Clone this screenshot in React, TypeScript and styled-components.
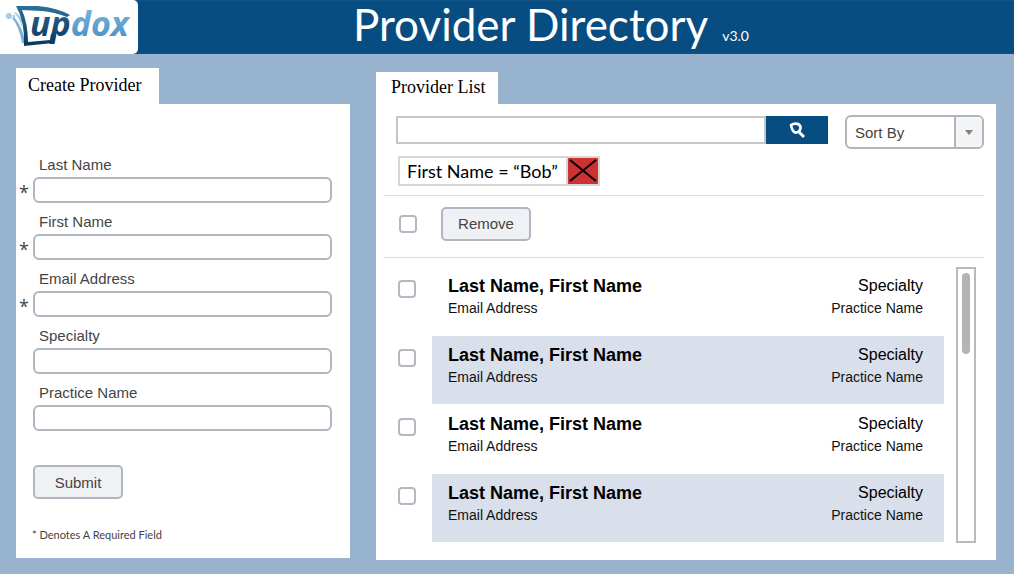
import React from "react";
import styled, { createGlobalStyle } from "styled-components";

const sans = '"Liberation Sans", Arial, sans-serif';
const serif = '"Liberation Serif", "Times New Roman", serif';
const humanist = 'Lato, "Open Sans", sans-serif';

const GlobalStyle = createGlobalStyle`
  *, *::before, *::after { box-sizing: border-box; }
  body { margin: 0; background: #97b3ce; font-family: ${sans}; color: #000; }
  button, input, select { font-family: inherit; margin: 0; }
`;

const Header = styled.header`
  display: flex;
  height: 54px;
  background: #074d81;
  border-top: 1px solid #0d5588;
  border-bottom: 1px solid #0d5588;
`;

const LogoBox = styled.a`
  flex: none;
  width: 138px;
  height: 54px;
  margin-top: -1px;
  background: #fff;
  border-radius: 0 5px 5px 0;
  svg { display: block; }
`;

const TitleGroup = styled.div`
  display: flex;
  flex: 1;
  align-items: baseline;
  justify-content: center;
  gap: 14px;
  padding-right: 50px;
  font-family: ${humanist};
  color: #fff;
`;

const Title = styled.h1`
  margin: 0;
  font-size: 44px;
  font-weight: 400;
  line-height: 46px;
`;

const Version = styled.span`
  font-size: 14px;
`;

const Main = styled.main`
  display: flex;
  align-items: stretch;
  gap: 26px;
  padding: 14px 18px 14px 16px;
`;

const Column = styled.section<{ $grow: number }>`
  display: flex;
  flex-direction: column;
  flex: ${(p) => p.$grow} 1 0;
  min-width: 0;
`;

const Tab = styled.h2<{ $short?: boolean }>`
  align-self: flex-start;
  margin: ${(p) => (p.$short ? "4px 0 0" : "0")};
  padding: ${(p) => (p.$short ? "4px 12px 6px 15px" : "6px 18px 8px 12px")};
  background: #fff;
  font-family: ${serif};
  font-size: 18px;
  font-weight: 400;
  line-height: 22px;
`;

const FormPanel = styled.form`
  display: flex;
  flex-direction: column;
  align-items: flex-start;
  padding: 52px 18px 15px 3px;
  background: #fff;
`;

const Fields = styled.div`
  display: flex;
  flex-direction: column;
  gap: 10px;
  width: 100%;
`;

const Field = styled.div`
  display: grid;
  grid-template-columns: 14px 1fr;
  row-gap: 4px;
`;

const Label = styled.label`
  grid-column: 2;
  padding-left: 6px;
  font-size: 15px;
  line-height: 17px;
  color: #444;
`;

const Required = styled.span`
  font-family: "Open Sans", sans-serif;
  font-size: 18px;
  line-height: 30px;
  height: 26px;
  color: #444;
`;

const TextBox = styled.input`
  grid-column: 2;
  width: 100%;
  height: 26px;
  padding: 0 8px;
  border: 2px solid #b2b6bf;
  border-radius: 6px;
  background: #fff;
  font-size: 15px;
`;

const Button = styled.button`
  width: 90px;
  height: 34px;
  padding: 0;
  border: 2px solid #b2b6bf;
  border-radius: 5px;
  background: #f0f1f4;
  font-size: 15px;
  color: #444;
`;

const SubmitRow = styled.div`
  padding: 34px 0 28px 14px;
`;

const Note = styled.p`
  margin: 0;
  padding-left: 13px;
  font-family: ${humanist};
  font-size: 11px;
  line-height: 16px;
  color: #444;
`;

const ListPanel = styled.div`
  padding: 11px 12px 17px 8px;
  background: #fff;
`;

const SearchRow = styled.form`
  display: flex;
  align-items: center;
  padding-left: 12px;
`;

const SearchGroup = styled.div`
  display: flex;
  flex: 1;
  min-width: 0;
  margin-bottom: 4px;
`;

const SearchInput = styled.input`
  flex: 1;
  min-width: 0;
  height: 28px;
  padding: 0 8px;
  border: 2px solid #c6c6c6;
  background: #fff;
  font-size: 15px;
`;

const SearchButton = styled.button`
  display: flex;
  align-items: center;
  justify-content: center;
  width: 62px;
  height: 28px;
  padding: 0;
  border: 0;
  background: #074d81;
`;

const SortBox = styled.div`
  position: relative;
  width: 139px;
  height: 34px;
  margin-left: 17px;
`;

const SortSelect = styled.select`
  appearance: none;
  width: 100%;
  height: 100%;
  padding: 0 32px 0 8px;
  border: 2px solid #b0b4bd;
  border-radius: 6px;
  background: #fff;
  font-size: 15px;
  color: #444;
`;

const SortArrow = styled.span`
  position: absolute;
  top: 2px;
  right: 2px;
  bottom: 2px;
  display: flex;
  align-items: center;
  justify-content: center;
  width: 28px;
  border-left: 2px solid #b0b4bd;
  border-radius: 0 4px 4px 0;
  background: #f3f4f6;
  pointer-events: none;
`;

const Chip = styled.div`
  display: inline-flex;
  height: 30px;
  margin: 7px 0 9px 14px;
  border: 2px solid #d6d6d6;
  font-family: ${humanist};
  font-size: 18px;
  line-height: 26px;
  vertical-align: top;
`;

const ChipText = styled.span`
  padding: 0 8px 0 7px;
  border-right: 2px solid #d6d6d6;
`;

const ChipRemove = styled.button`
  width: 30px;
  padding: 0;
  border: 0;
  background: #cd3131;
  svg { display: block; }
`;

const BulkRow = styled.div`
  display: flex;
  align-items: center;
  gap: 24px;
  height: 63px;
  padding: 0 0 6px 15px;
  border-top: 1px solid #d8dde8;
  border-bottom: 1px solid #d8dde8;
`;

const CheckBox = styled.input`
  appearance: none;
  flex: none;
  width: 18px;
  height: 18px;
  border: 2px solid #b4b8c1;
  border-radius: 4px;
  background: #fff;
  &:checked { background: #074d81; }
`;

const ListArea = styled.div`
  display: flex;
  gap: 12px;
  padding: 9px 8px 0 14px;
`;

const Providers = styled.ul`
  display: flex;
  flex: 1;
  flex-direction: column;
  gap: 1px;
  min-width: 0;
  margin: 0;
  padding: 0 0 1px;
  list-style: none;
`;

const ProviderItem = styled.li`
  display: flex;
  align-items: flex-start;
  gap: 16px;
`;

const RowCheck = styled(CheckBox)`
  margin-top: 13px;
`;

const ProviderCard = styled.div<{ $shaded: boolean }>`
  display: flex;
  flex: 1;
  justify-content: space-between;
  height: 68px;
  padding: 8px 21px 0 16px;
  background: ${(p) => (p.$shaded ? "#d9dfeb" : "#fff")};
`;

const CardSide = styled.div<{ $end?: boolean }>`
  display: flex;
  flex-direction: column;
  align-items: ${(p) => (p.$end ? "flex-end" : "flex-start")};
`;

const Name = styled.strong`
  font-size: 18px;
  line-height: 22px;
`;

const Specialty = styled.span`
  font-size: 16px;
  line-height: 22px;
`;

const Detail = styled.span`
  font-size: 14px;
  line-height: 22px;
  color: #111;
`;

const ScrollTrack = styled.div`
  width: 20px;
  padding: 4px;
  border: 2px solid #bababa;
  background: #fff;
`;

const ScrollThumb = styled.div`
  width: 8px;
  height: 81px;
  border-radius: 4px;
  background: #b4b4b4;
`;

const Logo = () => (
  <svg width="138" height="54" viewBox="0 0 138 54" role="img" aria-label="updox">
    <defs>
      <linearGradient id="dark" x1="0" y1="0" x2="0" y2="1">
        <stop offset="0" stopColor="#2b7199" />
        <stop offset="1" stopColor="#0b3658" />
      </linearGradient>
      <linearGradient id="light" x1="0" y1="0" x2="0" y2="1">
        <stop offset="0" stopColor="#83bfe2" />
        <stop offset="1" stopColor="#4489bd" />
      </linearGradient>
    </defs>
    <path d="M12 18 Q19 26 22 43 L25 43 Q23 27 14 17Z" fill="#78b4d8" />
    <path d="M14 13 Q19 17 22 27 L22 20 Q20 15 15 12Z" fill="#a5cde5" />
    <circle cx="9" cy="16" r="3" fill="#a5cde5" />
    <circle cx="14" cy="16" r="1" fill="#78b4d8" />
    <path
      d="M16 6 L38 6 Q58 8 70 15 L67 17 Q54 12 42 11 L22 10 Q28 24 28 42 L50 40 L51 34 L55 34 L53 43 L24 46 Q25 21 16 6Z"
      fill="url(#dark)"
    />
    <text y="36" fontFamily="Open Sans, sans-serif" fontSize="34" fontWeight="700" fontStyle="italic">
      <tspan x="30" fill="url(#dark)">up</tspan>
      <tspan fill="url(#light)">dox</tspan>
    </text>
  </svg>
);

const fields = [
  { id: "last-name", label: "Last Name", required: true },
  { id: "first-name", label: "First Name", required: true },
  { id: "email", label: "Email Address", required: true },
  { id: "specialty", label: "Specialty", required: false },
  { id: "practice", label: "Practice Name", required: false },
];

const providers = [1, 2, 3, 4].map((id) => ({
  id,
  name: "Last Name, First Name",
  email: "Email Address",
  specialty: "Specialty",
  practice: "Practice Name",
}));

export default function App() {
  return (
    <>
      <GlobalStyle />
      <Header>
        <LogoBox href="#"><Logo /></LogoBox>
        <TitleGroup>
          <Title>Provider Directory</Title>
          <Version>v3.0</Version>
        </TitleGroup>
      </Header>
      <Main>
        <Column $grow={334}>
          <Tab>Create Provider</Tab>
          <FormPanel onSubmit={(e) => e.preventDefault()}>
            <Fields>
              {fields.map((f) => (
                <Field key={f.id}>
                  <Label htmlFor={f.id}>{f.label}</Label>
                  {f.required && <Required>*</Required>}
                  <TextBox id={f.id} type="text" required={f.required} />
                </Field>
              ))}
            </Fields>
            <SubmitRow><Button type="submit">Submit</Button></SubmitRow>
            <Note>* Denotes A Required Field</Note>
          </FormPanel>
        </Column>
        <Column $grow={620}>
          <Tab $short>Provider List</Tab>
          <ListPanel>
            <SearchRow onSubmit={(e) => e.preventDefault()}>
              <SearchGroup>
                <SearchInput type="text" aria-label="Search providers" />
                <SearchButton type="submit" aria-label="Search">
                  <svg width="18" height="18" viewBox="0 0 18 18" fill="none" stroke="#fff">
                    <path
                      d="M3 4 Q7 1.5 11 3.5 Q13.5 6 12 9 Q10 12 7 11.5 Q4 10 3 4Z"
                      strokeWidth="2.6"
                      strokeLinejoin="round"
                    />
                    <path d="M11 11 L16 16" strokeWidth="3" />
                  </svg>
                </SearchButton>
              </SearchGroup>
              <SortBox>
                <SortSelect aria-label="Sort by" defaultValue="">
                  <option value="">Sort By</option>
                  <option>Last Name</option>
                  <option>Specialty</option>
                </SortSelect>
                <SortArrow>
                  <svg width="8" height="5" viewBox="0 0 8 5"><path d="M0 0H8L4 5Z" fill="#808080" /></svg>
                </SortArrow>
              </SortBox>
            </SearchRow>
            <Chip>
              <ChipText>First Name = “Bob”</ChipText>
              <ChipRemove type="button" aria-label="Remove filter">
                <svg width="30" height="26" viewBox="0 0 30 26" stroke="#000" strokeWidth="2">
                  <path d="M2 2 L28 23 M28 2 L2 23" />
                </svg>
              </ChipRemove>
            </Chip>
            <BulkRow>
              <CheckBox type="checkbox" aria-label="Select all" />
              <Button type="button">Remove</Button>
            </BulkRow>
            <ListArea>
              <Providers>
                {providers.map((p, i) => (
                  <ProviderItem key={p.id}>
                    <RowCheck type="checkbox" aria-label={`Select provider ${p.id}`} />
                    <ProviderCard $shaded={i % 2 === 1}>
                      <CardSide>
                        <Name>{p.name}</Name>
                        <Detail>{p.email}</Detail>
                      </CardSide>
                      <CardSide $end>
                        <Specialty>{p.specialty}</Specialty>
                        <Detail>{p.practice}</Detail>
                      </CardSide>
                    </ProviderCard>
                  </ProviderItem>
                ))}
              </Providers>
              <ScrollTrack><ScrollThumb /></ScrollTrack>
            </ListArea>
          </ListPanel>
        </Column>
      </Main>
    </>
  );
}
